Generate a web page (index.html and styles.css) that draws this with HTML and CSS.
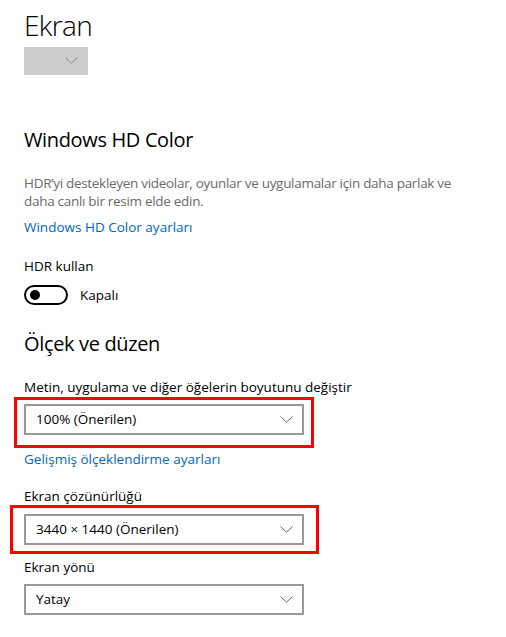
FILE: index.html
```html
<!DOCTYPE html>
<html lang="tr">
<head>
<meta charset="utf-8">
<title>Ekran</title>
<link rel="stylesheet" href="styles.css">
</head>
<body>
<main class="page">
  <h1 class="title">Ekran</h1>
  <div class="mini-select">
    <svg class="chev chev-mini" width="13" height="7" viewBox="0 0 13 7"><path d="M0.5 0.5 L6.5 6.2 L12.5 0.5" fill="none" stroke="#8a8a8a" stroke-width="1"/></svg>
  </div>

  <h2 class="section-title hd">Windows HD Color</h2>
  <p class="desc">HDR’yi destekleyen videolar, oyunlar ve uygulamalar için daha parlak ve daha canlı bir resim elde edin.</p>
  <a class="link link-hd" href="#">Windows HD Color ayarları</a>

  <div class="label label-hdr">HDR kullan</div>
  <div class="toggle-row">
    <span class="toggle"><span class="knob"></span></span>
    <span class="toggle-text">Kapalı</span>
  </div>

  <h2 class="section-title scale">Ölçek ve düzen</h2>
  <div class="label label-size">Metin, uygulama ve diğer öğelerin boyutunu değiştir</div>
  <div class="select marked mark-one">
    <span>100% (Önerilen)</span>
    <svg class="chev" width="13" height="7" viewBox="0 0 13 7"><path d="M0.5 0.5 L6.5 6.2 L12.5 0.5" fill="none" stroke="#666" stroke-width="1"/></svg>
  </div>
  <a class="link link-adv" href="#">Gelişmiş ölçeklendirme ayarları</a>

  <div class="label label-res">Ekran çözünürlüğü</div>
  <div class="select marked mark-two">
    <span>3440 × 1440 (Önerilen)</span>
    <svg class="chev" width="13" height="7" viewBox="0 0 13 7"><path d="M0.5 0.5 L6.5 6.2 L12.5 0.5" fill="none" stroke="#666" stroke-width="1"/></svg>
  </div>

  <div class="label label-orient">Ekran yönü</div>
  <div class="select select-orient">
    <span>Yatay</span>
    <svg class="chev" width="13" height="7" viewBox="0 0 13 7"><path d="M0.5 0.5 L6.5 6.2 L12.5 0.5" fill="none" stroke="#666" stroke-width="1"/></svg>
  </div>
</main>
</body>
</html>
```

FILE: styles.css
```css
* { box-sizing: border-box; }

html, body {
  margin: 0;
  padding: 0;
  background: #fff;
}

body {
  font-family: "Open Sans", "Noto Sans", "DejaVu Sans", sans-serif;
  font-size: 13.5px;
  color: #000;
}

.page {
  padding: 0 0 0 24px;
  display: flex;
  flex-direction: column;
  align-items: flex-start;
}

.title {
  margin: 7px 0 0;
  font-size: 28px;
  font-weight: 300;
  line-height: 36px;
  letter-spacing: -0.6px;
}

.mini-select {
  margin-top: 4px;
  width: 64px;
  height: 28px;
  background: #ccc;
  position: relative;
  display: flex;
  align-items: center;
  justify-content: flex-end;
  padding-right: 10px;
}

.chev-mini { margin-top: -2px; }

.section-title {
  margin: 0;
  font-size: 20px;
  font-weight: 400;
  line-height: 28px;
  letter-spacing: -0.35px;
}

.section-title.hd { margin-top: 51px; }
.section-title.scale { margin-top: 25px; }

.desc {
  margin: 20px 0 0;
  width: 442px;
  color: #6b6b6b;
  line-height: 18px;
  letter-spacing: -0.3px;
}

.link {
  color: #0067c0;
  text-decoration: none;
  line-height: 20px;
}

.link-hd { margin-top: 7px; }
.link-adv { margin-top: 14px; }

.label {
  line-height: 20px;
}

.label-hdr { margin-top: 19px; }
.label-size { margin-top: 19px; }
.label-res { margin-top: 17px; }
.label-orient { margin-top: 12px; }

.toggle-row {
  margin-top: 9px;
  display: flex;
  align-items: center;
  gap: 12px;
  height: 20px;
}

.toggle {
  width: 44px;
  height: 20px;
  border: 2px solid #000;
  border-radius: 10px;
  display: flex;
  align-items: center;
  padding-left: 4px;
}

.knob {
  width: 10px;
  height: 10px;
  border-radius: 50%;
  background: #000;
}

.toggle-text {
  line-height: 20px;
  margin-top: -1px;
}

.select {
  width: 280px;
  height: 31px;
  border: 2px solid #999;
  display: flex;
  align-items: center;
  justify-content: space-between;
  padding: 0 9px 0 10px;
  line-height: 27px;
  position: relative;
}

.select .chev { margin-top: -1px; }

.mark-one { margin-top: 7px; }
.mark-two { margin-top: 8px; }
.select-orient { margin-top: 7px; }

.marked::after {
  content: "";
  position: absolute;
  border: 3px solid #f00;
  pointer-events: none;
}

.mark-one::after {
  left: -12px;
  top: -9px;
  right: -12px;
  bottom: -15px;
}

.mark-two::after {
  left: -16px;
  top: -11px;
  right: -17px;
  bottom: -11px;
}
```
